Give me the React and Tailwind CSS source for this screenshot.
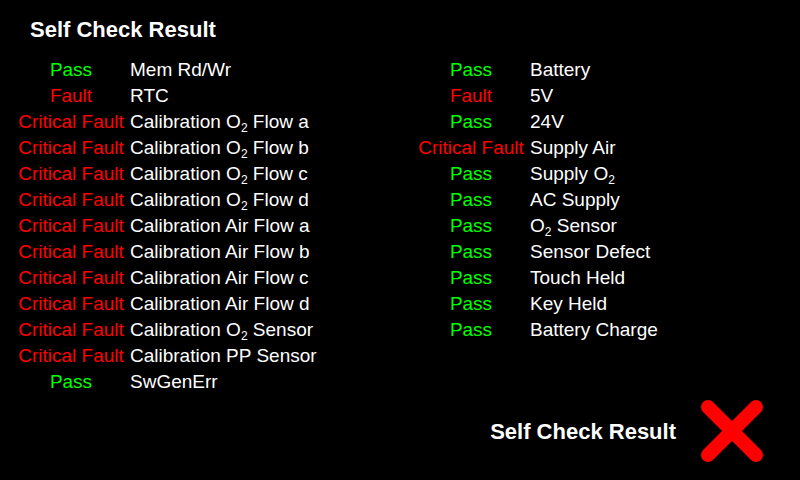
const O2 = () => (
  <>
    O<span className="inline-block align-[-4px] text-[12px] leading-none">2</span>
  </>
);

const leftRows = [
  ["Pass", "Mem Rd/Wr"],
  ["Fault", "RTC"],
  ["Critical Fault", <>Calibration <O2 /> Flow a</>],
  ["Critical Fault", <>Calibration <O2 /> Flow b</>],
  ["Critical Fault", <>Calibration <O2 /> Flow c</>],
  ["Critical Fault", <>Calibration <O2 /> Flow d</>],
  ["Critical Fault", "Calibration Air Flow a"],
  ["Critical Fault", "Calibration Air Flow b"],
  ["Critical Fault", "Calibration Air Flow c"],
  ["Critical Fault", "Calibration Air Flow d"],
  ["Critical Fault", <>Calibration <O2 /> Sensor</>],
  ["Critical Fault", "Calibration PP Sensor"],
  ["Pass", "SwGenErr"],
];

const rightRows = [
  ["Pass", "Battery"],
  ["Fault", "5V"],
  ["Pass", "24V"],
  ["Critical Fault", "Supply Air"],
  ["Pass", <>Supply <O2 /></>],
  ["Pass", "AC Supply"],
  ["Pass", <><O2 /> Sensor</>],
  ["Pass", "Sensor Defect"],
  ["Pass", "Touch Held"],
  ["Pass", "Key Held"],
  ["Pass", "Battery Charge"],
];

function ResultRow({ status, label }) {
  const color = status === "Pass" ? "text-[#00ff00]" : "text-[#ff0000]";
  return (
    <div className="flex h-[26px] items-center leading-[26px]">
      <span className={`w-[106px] whitespace-nowrap text-center ${color}`}>{status}</span>
      <span className="ml-[6px] whitespace-nowrap text-white">{label}</span>
    </div>
  );
}

export default function App() {
  return (
    <div
      className="flex h-[480px] w-[800px] flex-col overflow-hidden bg-black text-[19px]"
      style={{ fontFamily: '"Liberation Sans", Arial, sans-serif' }}
    >
      <h1 className="ml-[30px] mt-[17px] h-[26px] text-[22px] font-bold leading-[26px] text-white">
        Self Check Result
      </h1>

      <div className="mt-[14px] flex pl-[18px]">
        <div className="w-[400px]">
          {leftRows.map(([status, label], i) => (
            <ResultRow key={i} status={status} label={label} />
          ))}
        </div>
        <div className="w-[382px]">
          {rightRows.map(([status, label], i) => (
            <ResultRow key={i} status={status} label={label} />
          ))}
        </div>
      </div>

      <div className="mt-[3px] flex h-[66px] items-center justify-end pr-[36px]">
        <span className="text-[22px] font-bold text-white">Self Check Result</span>
        <svg className="ml-[24px]" width="64" height="64" viewBox="0 0 64 64">
          <path
            d="M8 8 L56 56 M56 8 L8 56"
            stroke="#ff0000"
            strokeWidth="14"
            strokeLinecap="round"
            fill="none"
          />
        </svg>
      </div>
    </div>
  );
}
